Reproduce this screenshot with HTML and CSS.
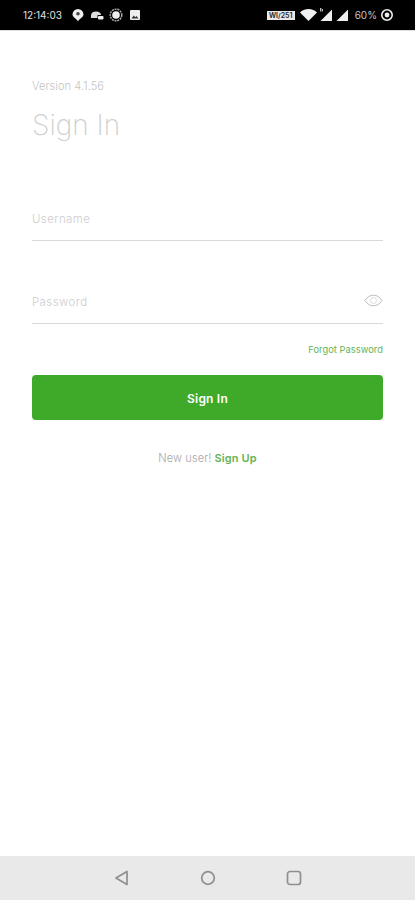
FILE: index.html
```html
<!DOCTYPE html>
<html lang="en">
<head>
  <meta charset="UTF-8" />
  <meta name="viewport" content="width=device-width, initial-scale=1.0"/>
  <title>Sign In</title>
  <link rel="stylesheet" href="styles.css">
</head>
<body>
  <div class="status-bar">
    <div class="status-left">
      <span class="clock">12:14:03</span>
      <svg class="status-icon" width="14" height="14" viewBox="0 0 14 14"><path d="M7 1a5.500 5.500 0 0 1 5.500 5.200c0 3-3.500 4-5.500 7-2-3-5.500-4-5.500-7A5.500 5.500 0 0 1 7 1z" fill="#eee"/><circle cx="7" cy="5.800" r="1.800" fill="#444"/></svg>
      <svg class="status-icon" width="14" height="14" viewBox="0 0 14 14"><path d="M1 10V7.500C1 5 3 3.500 6 3.500s5 1.500 5 3.500H7.500v3z" fill="#ddd"/><rect x="8" y="8" width="5.500" height="3.500" rx="1" fill="#eee"/></svg>
      <svg class="status-icon" width="14" height="14" viewBox="0 0 14 14"><circle cx="7" cy="7" r="5.800" fill="none" stroke="#aaa" stroke-width="1.500" stroke-dasharray="2 .8"/><circle cx="7" cy="7" r="3.800" fill="#eee"/></svg>
      <svg class="status-icon" width="14" height="14" viewBox="0 0 14 14"><rect x="2" y="2" width="10" height="10" rx="1" fill="#eee"/><path d="M3.500 10.500l2.200-3 1.600 1.800 1.200-1.200 2 2.400z" fill="#333"/></svg>
    </div>
    <div class="status-right">
      <span class="speed">WI/251</span>
      <svg class="wifi" width="20" height="14" viewBox="0 0 20 14"><path d="M1 4.500C3 2.500 6 1 9.500 1S16 2.500 18 4.500L9.500 13z" fill="#f2f2f2"/></svg>
      <svg class="signal" width="14" height="14" viewBox="0 0 14 14"><path d="M13 1.500V13H1.500z" fill="#eee"/><path d="M1 0h1.400v3.500H1zM3 1h1v2.500H3z" fill="#bbb"/></svg>
      <svg class="signal" width="14" height="14" viewBox="0 0 14 14"><path d="M13 1.500V13H1.500z" fill="#eee"/></svg>
      <span class="battery-text">60%</span>
      <svg class="status-icon" width="14" height="14" viewBox="0 0 14 14"><circle cx="7" cy="7" r="5.200" fill="none" stroke="#eee" stroke-width="1.600"/><circle cx="7" cy="7" r="2.400" fill="#eee"/></svg>
    </div>
  </div>

  <div class="content">
    <p class="version">Version 4.1.56</p>
    <h1 class="title">Sign In</h1>

    <div class="field field-first">
      <span class="placeholder">Username</span>
    </div>
    <div class="field">
      <span class="placeholder">Password</span>
      <svg class="eye" width="19" height="13" viewBox="0 0 19 13"><path d="M1 6.500C3.500 2.800 6.200 1.200 9.500 1.200S15.500 2.800 18 6.500c-2.500 3.700-5.200 5.300-8.500 5.300S3.500 10.200 1 6.500z" fill="none" stroke="#bdbdbd" stroke-width="1"/><circle cx="9.500" cy="6.500" r="3" fill="none" stroke="#dcdcdc" stroke-width="1"/></svg>
    </div>

    <div class="forgot"><a>Forgot Password</a></div>
    <button class="submit-btn" type="button">Sign In</button>
    <p class="signup">New user! <a>Sign Up</a></p>
  </div>

  <div class="nav-bar">
    <svg width="18" height="18" viewBox="0 0 18 18"><path d="M14 2.500V15.500L3 9z" fill="none" stroke="#8f8f8f" stroke-width="1.700" stroke-linejoin="round"/></svg>
    <svg width="18" height="18" viewBox="0 0 18 18"><circle cx="9" cy="9" r="6.300" fill="none" stroke="#8f8f8f" stroke-width="1.700"/></svg>
    <svg width="18" height="18" viewBox="0 0 18 18"><rect x="2.500" y="2.500" width="13" height="13" rx="2.500" fill="none" stroke="#8f8f8f" stroke-width="1.700"/></svg>
  </div>
</body>
</html>
```

FILE: styles.css
```css
:root {
  --green: #3fa929;
  --link: #66b356;
  --line: #d9d9d9;
  --hint: #cdcdcd;
  --font: 'Inter', 'Noto Sans', sans-serif;
}

html, body {
  height: 100%;
}

body {
  margin: 0;
  height: 900px;
  display: flex;
  flex-direction: column;
  overflow: hidden;
  background: #ffffff;
  font-family: var(--font);
}

.status-bar {
  height: 30px;
  flex: none;
  display: flex;
  justify-content: space-between;
  align-items: center;
  padding: 0 21px 0 23px;
  background: #000000;
  color: #e0e0e0;
  font-size: 10px;
  box-shadow: 0 1px 0 #dedede;
}

.status-left, .status-right {
  display: flex;
  align-items: center;
}

.status-left .status-icon {
  margin-left: 5px;
}

.clock {
  margin-right: 9px;
}

.status-left .status-icon:first-of-type {
  margin-left: 0;
}

.speed {
  background: #e8e8e8;
  color: #222;
  font-size: 7px;
  font-weight: 600;
  line-height: 9px;
  padding: 0 1px;
  width: 26px;
  text-align: center;
}

.wifi {
  margin-left: 4px;
}

.signal + .signal {
  margin-left: 2px;
}

.battery-text {
  margin: 0 3px 0 6px;
  color: #c4c4c4;
}

.content {
  flex: 1;
  padding: 49px 32px 0;
}

.version {
  margin: 0;
  font-size: 11px;
  line-height: 14px;
  font-weight: 300;
  color: #c4c4c4;
  letter-spacing: 0.1px;
}

.title {
  margin: 14px 0 0;
  font-size: 28px;
  line-height: 36px;
  font-weight: 200;
  color: #cfcfcf;
}

.field {
  height: 40px;
  display: flex;
  justify-content: space-between;
  align-items: center;
  padding-bottom: 3px;
  box-sizing: border-box;
  border-bottom: 1.500px solid var(--line);
  margin-top: 43px;
}

.field-first {
  margin-top: 58px;
}

.placeholder {
  font-size: 11.500px;
  font-weight: 300;
  color: var(--hint);
  letter-spacing: 0.4px;
}

.eye {
  margin-bottom: 4px;
}

.forgot {
  margin-top: 20px;
  text-align: right;
  font-size: 9.300px;
  line-height: 12px;
  color: var(--link);
  letter-spacing: 0.05px;
}

.submit-btn {
  display: block;
  width: 100%;
  height: 45px;
  margin-top: 19px;
  padding: 1px 0 0;
  border: none;
  border-radius: 4px;
  background: var(--green);
  color: #ffffff;
  font-family: var(--font);
  font-size: 12px;
  font-weight: 600;
  letter-spacing: 0.2px;
}

.signup {
  margin: 30px 0 0;
  text-align: center;
  font-size: 11px;
  line-height: 16px;
  font-weight: 300;
  color: #a6a6a6;
  letter-spacing: 0.1px;
}

.signup a {
  color: var(--link);
  font-weight: 600;
}

.nav-bar {
  height: 44px;
  flex: none;
  display: flex;
  justify-content: center;
  align-items: center;
  gap: 68px;
  background: #e9e9e9;
}
```
